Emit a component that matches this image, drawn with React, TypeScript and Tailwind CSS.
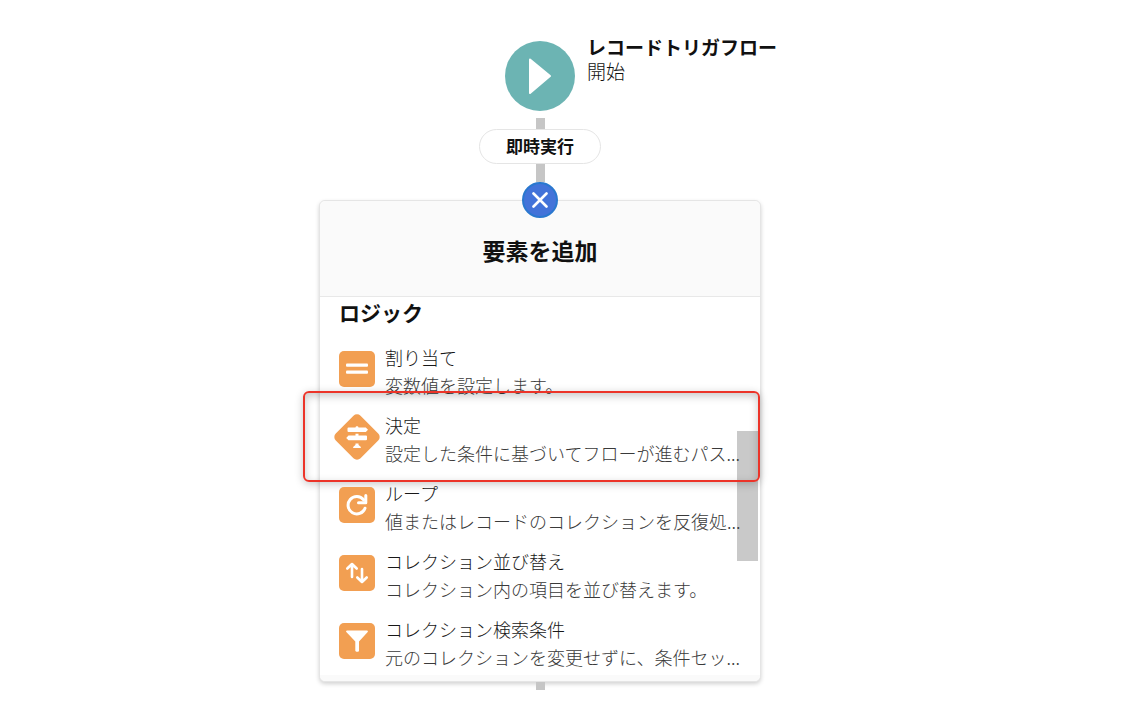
import type { ReactNode } from "react";
import clsx from "clsx";

interface FlowElement {
  title: string;
  description: string;
  icon: ReactNode;
  highlighted?: boolean;
}

function SquareIcon({ children }: { children: ReactNode }) {
  return (
    <svg viewBox="0 0 36 36" className="h-9 w-9" aria-hidden="true">
      <rect width="36" height="36" rx="5" fill="#f29f52" />
      {children}
    </svg>
  );
}

const elements: FlowElement[] = [
  {
    title: "割り当て",
    description: "変数値を設定します。",
    icon: (
      <SquareIcon>
        <rect x="7" y="12.500" width="22" height="3.200" rx="1" fill="#fff" />
        <rect x="7" y="19.500" width="22" height="3.200" rx="1" fill="#fff" />
      </SquareIcon>
    ),
  },
  {
    title: "決定",
    description: "設定した条件に基づいてフローが進むパス...",
    highlighted: true,
    icon: (
      <svg viewBox="0 0 46 46" className="-m-[5px] h-[46px] w-[46px]" aria-hidden="true">
        <rect x="5.500" y="5.500" width="35" height="35" rx="5" transform="rotate(45 23 23)" fill="#f29f52" />
        <path
          d="M14.500 13.500h7c0-1.800 3-1.800 3 0h7.300l2.200 2.300-2.200 2.300H14.500a1 1 0 0 1-1-1v-2.600a1 1 0 0 1 1-1z"
          fill="#fff"
        />
        <path
          d="M14.500 21.500h7v-1.700h3v1.700h7.500a1 1 0 0 1 1 1v2.700a1 1 0 0 1-1 1H14.500l-2.300-2.300z"
          fill="#fff"
        />
        <path
          d="M21.500 29.500h3v1.200c0 .8 2.500 1.600 2.500 2.600 0 .4-.3.700-.7.700h-6.600c-.4 0-.7-.3-.7-.7 0-1 2.500-1.800 2.500-2.600z"
          fill="#fff"
        />
      </svg>
    ),
  },
  {
    title: "ループ",
    description: "値またはレコードのコレクションを反復処...",
    icon: (
      <SquareIcon>
        <path d="M26 21.200A8.700 8.700 0 1 1 24.600 12.800" fill="none" stroke="#fff" strokeWidth="3" strokeLinecap="round" />
        <path d="M26.800 8.500v7.200h-7.300" fill="none" stroke="#fff" strokeWidth="3" strokeLinecap="round" strokeLinejoin="round" />
      </SquareIcon>
    ),
  },
  {
    title: "コレクション並び替え",
    description: "コレクション内の項目を並び替えます。",
    icon: (
      <SquareIcon>
        <g fill="none" stroke="#fff" strokeWidth="2.600" strokeLinecap="round" strokeLinejoin="round">
          <path d="M13 22V9.500M8.300 13.500L13 9l4.700 4.500" />
          <path d="M23 14v12.500M18.300 22.500L23 27l4.700-4.500" />
        </g>
      </SquareIcon>
    ),
  },
  {
    title: "コレクション検索条件",
    description: "元のコレクションを変更せずに、条件セッ...",
    icon: (
      <SquareIcon>
        <path
          d="M8 7.500h20c.8 0 1.200.8.700 1.400L20 18.500v9c0 .8-.4 1.200-1.100 1.200h-1.400c-.7 0-1.200-.4-1.200-1.200v-9L7.300 8.900c-.5-.6-.1-1.400.7-1.400z"
          fill="#fff"
        />
      </SquareIcon>
    ),
  },
];

function Connector({ className }: { className: string }) {
  return <div className={clsx("w-[9px] bg-[#c6c6c6]", className)} />;
}

function ElementRow({ title, description, icon, highlighted }: FlowElement) {
  return (
    <li className="relative">
      <button type="button" className="flex w-full items-start gap-2.5 text-left">
        <span className="mt-2 shrink-0">{icon}</span>
        <span className="min-w-0 whitespace-nowrap text-[18px] font-light leading-7">
          <span className="block text-[#181818]">{title}</span>
          <span className="block text-[#3a3a3a]">{description}</span>
        </span>
      </button>
      {highlighted && (
        <span className="pointer-events-none absolute -left-9 -right-[23px] -top-5 h-[91px] rounded-md border-2 border-[#ec3429] shadow-[0_2px_8px_rgba(0,0,0,0.22),inset_0_3px_8px_rgba(0,0,0,0.22)]" />
      )}
    </li>
  );
}

export default function App() {
  return (
    <main className="flex min-h-screen flex-col items-center bg-white pb-8 pr-[68px] pt-[41px] font-['Noto_Sans_CJK_JP',sans-serif] text-[#111]">
      <div className="grid w-full grid-cols-[1fr_70px_1fr] gap-3">
        <svg viewBox="0 0 70 70" className="col-start-2 h-[70px] w-[70px]" aria-hidden="true">
          <circle cx="35" cy="35" r="35" fill="#6cb4b3" />
          <path d="M25 18.500L45 35 25 52z" fill="#fff" stroke="#fff" strokeWidth="2" strokeLinejoin="round" />
        </svg>
        <div className="-mt-1.5 text-[19px] leading-6">
          <h1 className="font-bold">レコードトリガフロー</h1>
          <p className="font-light">開始</p>
        </div>
      </div>

      <Connector className="mt-[7px] h-[11px]" />
      <div className="rounded-full border border-[#e5e5e5] bg-white px-[26px] pb-0.5 text-[17px] font-bold leading-[31px]">
        即時実行
      </div>
      <Connector className="h-[18px]" />

      <button
        type="button"
        aria-label="閉じる"
        className="z-10 -mb-[18px] flex h-9 w-9 items-center justify-center rounded-full border-2 border-[#2a78cf] bg-[#4373d9]"
      >
        <svg viewBox="0 0 16 16" className="h-4 w-4" aria-hidden="true">
          <path d="M1.500 1.500l13 13M14.500 1.500l-13 13" stroke="#fff" strokeWidth="2.600" strokeLinecap="round" />
        </svg>
      </button>

      <section className="w-full max-w-[442px] rounded-md border border-[#e5e5e5] bg-white shadow-[0_2px_4px_rgba(0,0,0,0.18)]">
        <header className="rounded-t-md border-b border-[#e8e8e8] bg-[#fafafa] pb-7 pt-[31px] text-center">
          <h2 className="text-[23px] font-bold leading-9">要素を追加</h2>
        </header>
        <div className="flex pl-[19px]">
          <div className="min-w-0 flex-1">
            <h3 className="text-[21px] font-bold leading-[30px]">ロジック</h3>
            <ul className="flex flex-col gap-3 pt-4">
              {elements.map((element) => (
                <ElementRow key={element.title} {...element} />
              ))}
            </ul>
          </div>
          <div className="mr-0.5 w-[21px] shrink-0 pt-[134px]">
            <div className="h-[130px] bg-[#c9c9c9]" />
          </div>
        </div>
        <div className="mt-1 h-1.5 rounded-b-md bg-[#fafafa]" />
      </section>
      <Connector className="h-2" />
    </main>
  );
}
